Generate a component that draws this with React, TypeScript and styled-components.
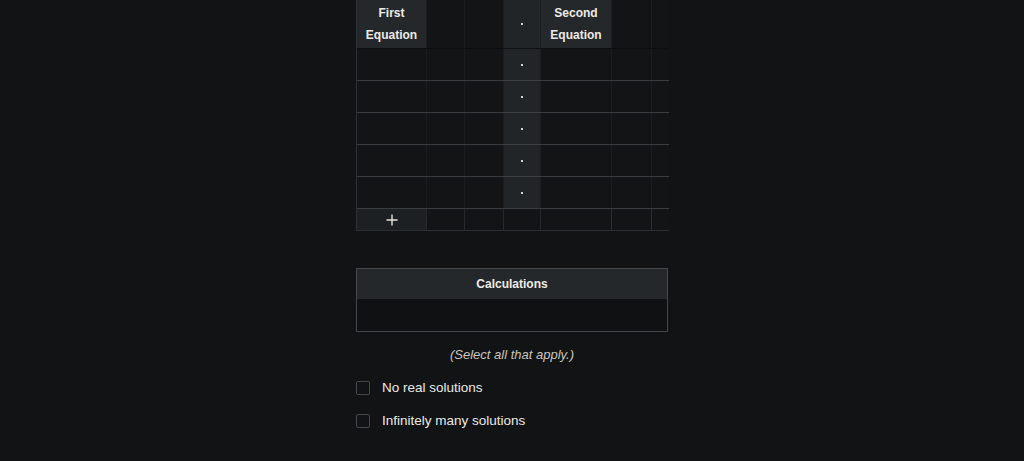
import React from "react";
import styled, { createGlobalStyle } from "styled-components";

const Global = createGlobalStyle`
  html, body { margin: 0; padding: 0; background: #121315; }
  body { font-family: "Liberation Sans", Arial, sans-serif; color: #e8e6e1; }
`;

const Page = styled.div`
  width: 312px;
  margin: 0 auto;
  display: flex;
  flex-direction: column;
`;

const TableScroll = styled.div`
  width: 313px;
  overflow: hidden;
  border-left: 1px solid #2e3134;
  box-sizing: border-box;
`;

const COLS = "70px 38px 39px 37px 71px 40px 40px 40px";

const Row = styled.div<{ $h: number; $line: string }>`
  display: grid;
  grid-template-columns: ${COLS};
  height: ${(p) => p.$h}px;
  border-bottom: 1px solid ${(p) => p.$line};
  box-sizing: border-box;
  width: max-content;
`;

const Cell = styled.div<{ $bg?: string; $edge?: string }>`
  background: ${(p) => p.$bg || "#131416"};
  border-right: 1px solid ${(p) => p.$edge || "#1b1d1f"};
  box-sizing: border-box;
  display: flex;
  align-items: center;
  justify-content: center;
  text-align: center;
`;

const HeadText = styled.div`
  font-size: 12px;
  font-weight: 700;
  line-height: 22px;
  color: #ecebe6;
`;

const Dot = styled.span`
  width: 2px;
  height: 2px;
  background: #cfd0d0;
  display: block;
`;

const PlusIcon = styled.svg`
  width: 12px;
  height: 12px;
  display: block;
`;

const Calc = styled.div`
  margin-top: 37px;
  border: 1px solid #46494c;
  display: flex;
  flex-direction: column;
`;

const CalcHead = styled.div`
  height: 30px;
  background: #25282b;
  display: flex;
  align-items: center;
  justify-content: center;
  font-size: 12px;
  font-weight: 700;
  color: #ecebe6;
`;

const CalcBody = styled.div`
  height: 32px;
  background: #101113;
`;

const Hint = styled.div`
  margin-top: 14px;
  text-align: center;
  font-style: italic;
  font-size: 13px;
  color: #c9c6bc;
  line-height: 18px;
`;

const Options = styled.div`
  margin-top: 15px;
  display: flex;
  flex-direction: column;
  gap: 15px;
`;

const Option = styled.label`
  display: flex;
  align-items: center;
  gap: 12px;
  font-size: 13.5px;
  color: #ebe9e4;
  line-height: 18px;
`;

const Box = styled.span`
  width: 14px;
  height: 14px;
  border: 1.5px solid #45484b;
  border-radius: 2px;
  box-sizing: border-box;
  flex: none;
`;

const DOT_BG = "#222528";
const HEAD_BG = "#25282b";

export default function App() {
  const body = [0, 1, 2, 3, 4];
  return (
    <>
      <Global />
      <Page>
        <TableScroll>
          <Row $h={49} $line="#0e0f10">
            <Cell $bg={HEAD_BG}>
              <HeadText>First<br />Equation</HeadText>
            </Cell>
            <Cell />
            <Cell />
            <Cell $bg={DOT_BG}><Dot /></Cell>
            <Cell $bg={HEAD_BG}>
              <HeadText>Second<br />Equation</HeadText>
            </Cell>
            <Cell />
            <Cell />
            <Cell />
          </Row>
          {body.map((i) => (
            <Row key={i} $h={32} $line="#3b3e41">
              <Cell />
              <Cell />
              <Cell />
              <Cell $bg={DOT_BG}><Dot /></Cell>
              <Cell />
              <Cell />
              <Cell />
              <Cell />
            </Row>
          ))}
          <Row $h={22} $line="#2c2f31">
            <Cell $bg="#1d2022" $edge="#25282a">
              <PlusIcon viewBox="0 0 12 12">
                <path d="M6 0.5V11.5M0.5 6H11.5" stroke="#e6e4de" strokeWidth="1.4" fill="none" />
              </PlusIcon>
            </Cell>
            <Cell $edge="#25282a" />
            <Cell $edge="#25282a" />
            <Cell $edge="#25282a" />
            <Cell $edge="#2c2f31" />
            <Cell $edge="#2c2f31" />
            <Cell $edge="#2c2f31" />
            <Cell $edge="#2c2f31" />
          </Row>
        </TableScroll>
        <Calc>
          <CalcHead>Calculations</CalcHead>
          <CalcBody />
        </Calc>
        <Hint>(Select all that apply.)</Hint>
        <Options>
          <Option><Box />No real solutions</Option>
          <Option><Box />Infinitely many solutions</Option>
        </Options>
      </Page>
    </>
  );
}
